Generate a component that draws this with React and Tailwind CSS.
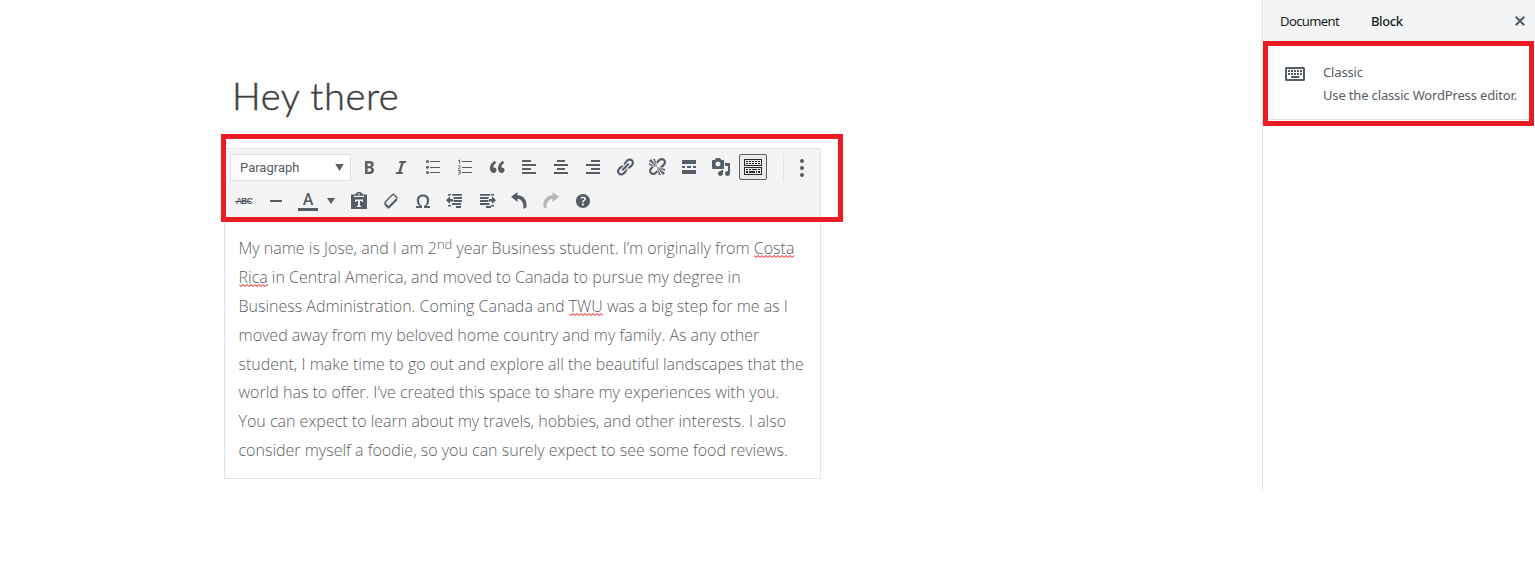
import React from "react";

function Icon({ d, children, className = "text-[#555d66]" }) {
  return (
    <svg viewBox="0 0 20 20" className={`h-5 w-5 shrink-0 ${className}`} fill="currentColor">
      {d ? <path d={d} /> : children}
    </svg>
  );
}

function Tool({ children, className = "w-8 justify-center" }) {
  return <div className={`flex h-[34px] shrink-0 items-center ${className}`}>{children}</div>;
}

const P = {
  bold: "M6 4v13h4.54c1.37 0 2.46-.33 3.26-1 .8-.66 1.2-1.58 1.2-2.77 0-.84-.17-1.51-.51-2.01s-.9-.85-1.67-1.03v-.09c.57-.1 1.02-.4 1.36-.9s.51-1.13.51-1.91c0-1.14-.39-1.98-1.17-2.5C12.75 4.26 11.5 4 9.78 4H6zm2.57 5.15V6.26h1.36c.73 0 1.27.11 1.61.32.34.22.51.58.51 1.07 0 .54-.16.92-.47 1.15s-.82.35-1.51.35h-1.5zm0 2.19h1.6c1.44 0 2.16.53 2.16 1.61 0 .6-.17 1.05-.51 1.34s-.86.43-1.57.43H8.57v-3.38z",
  italic: "M14.78 6h-2.13l-2.8 9h2.12l-.62 2H4.6l.62-2h2.14l2.8-9H8.03l.62-2h6.75z",
  quote: "M9.49 13.22c0-.74-.2-1.38-.61-1.9-.62-.78-1.83-.88-2.53-.72-.29-1.65 1.11-3.75 2.92-4.65L7.88 4c-2.73 1.3-5.42 4.28-4.96 8.05C3.21 14.43 4.59 16 6.54 16c.85 0 1.56-.25 2.12-.75s.83-1.18.83-2.03zm8.05 0c0-.74-.2-1.38-.61-1.9-.63-.78-1.83-.88-2.53-.72-.29-1.65 1.11-3.75 2.92-4.65L15.93 4c-2.73 1.3-5.41 4.28-4.95 8.05.29 2.38 1.66 3.95 3.61 3.95.85 0 1.56-.25 2.12-.75s.83-1.18.83-2.03z",
  link: "M17.74 2.76c1.68 1.69 1.68 4.41 0 6.1l-1.53 1.52c-1.12 1.12-2.7 1.47-4.14 1.09l2.62-2.61.76-.77.76-.76c.84-.84.84-2.2 0-3.04-.84-.85-2.2-.85-3.04 0l-.77.76-3.38 3.38c-.37-1.44-.02-3.02 1.1-4.14l1.52-1.53c1.69-1.68 4.42-1.68 6.1 0zM8.59 13.43l5.34-5.34c.42-.42.42-1.1 0-1.52-.44-.43-1.13-.39-1.53 0l-5.33 5.34c-.42.42-.42 1.1 0 1.52.44.43 1.13.39 1.52 0zm-.76 2.29l4.14-4.15c.38 1.44.03 3.02-1.09 4.14l-1.52 1.53c-1.69 1.68-4.41 1.68-6.1 0-1.68-1.68-1.68-4.42 0-6.1l1.53-1.52c1.12-1.12 2.7-1.47 4.14-1.1l-4.14 4.15c-.85.84-.85 2.2 0 3.05.84.84 2.2.84 3.04 0z",
  unlink: "M17.74 2.26c1.68 1.69 1.68 4.41 0 6.1l-1.53 1.52c-.32.33-.69.58-1.08.77L13 10l1.69-1.64.76-.77.76-.76c.84-.84.84-2.2 0-3.04-.84-.85-2.2-.85-3.04 0l-.77.76-.76.76L10 7l-.65-2.14c.19-.38.44-.75.77-1.07l1.52-1.53c1.69-1.68 4.42-1.68 6.1 0zM2 4l8 6-6-8zm4-2l4 8-2-8H6zM2 6l8 4-8-2V6zm7.36 7.69L10 13l.74 2.35-1.38 1.39c-1.69 1.68-4.41 1.68-6.1 0-1.68-1.68-1.68-4.42 0-6.1l1.39-1.38L7 10l-.69.64-1.52 1.53c-.85.84-.85 2.2 0 3.04.84.85 2.2.85 3.04 0zM18 16l-8-6 6 8zm-4 2l-4-8 2 8h2zm4-4l-8-4 8 2v2z",
  media: "M13 11V4c0-.55-.45-1-1-1h-1.67L9 1H5L3.67 3H2c-.55 0-1 .45-1 1v7c0 .55.45 1 1 1h10c.55 0 1-.45 1-1zM7 4.5c1.38 0 2.5 1.12 2.5 2.5S8.38 9.5 7 9.5 4.5 8.38 4.5 7 5.62 4.5 7 4.5zM14 6h5v10.5c0 1.38-1.12 2.5-2.5 2.5S14 17.88 14 16.5s1.12-2.5 2.5-2.5c.17 0 .34.02.5.05V9h-3V6zm-4 8.05V13h2v3.5c0 1.38-1.12 2.5-2.5 2.5S7 17.88 7 16.5 8.12 14 9.5 14c.17 0 .34.02.5.05z",
  help: "M17 10c0-3.87-3.14-7-7-7-3.87 0-7 3.13-7 7s3.13 7 7 7c3.86 0 7-3.13 7-7zm-6.3 1.48H9.14v-.43c0-.38.08-.7.24-.98s.46-.57.88-.89c.41-.29.68-.53.81-.71.14-.18.2-.39.2-.62 0-.25-.09-.44-.28-.58-.19-.13-.45-.19-.79-.19-.58 0-1.25.19-2 .57l-.64-1.28c.87-.49 1.8-.74 2.77-.74.81 0 1.45.2 1.92.58.48.39.71.91.71 1.55 0 .43-.09.8-.29 1.11-.19.32-.57.67-1.11 1.06-.38.28-.61.49-.71.63-.1.15-.15.34-.15.57v.35zm-1.47 2.74c-.18-.17-.27-.42-.27-.73 0-.33.08-.58.26-.75s.43-.25.77-.25c.32 0 .57.09.75.26s.27.42.27.74c0 .3-.09.55-.27.72-.18.18-.43.27-.75.27-.33 0-.58-.09-.76-.26z",
  close: "M14.95 6.46L11.41 10l3.54 3.54-1.41 1.41L10 11.42l-3.53 3.53-1.42-1.42L8.58 10 5.05 6.47l1.42-1.42L10 8.58l3.54-3.53z",
  omega: "M10 5.4c1.27 0 2.24.36 2.91 1.08.66.71 1 1.76 1 3.13 0 1.28-.23 2.37-.69 3.27-.47.89-1.27 1.52-2.22 2.12v2h6v-2h-3.69c.92-.64 1.62-1.34 2.12-2.34.49-1.01.74-2.13.74-3.35 0-1.78-.55-3.19-1.65-4.22S11.92 3.54 10 3.54s-3.43.53-4.52 1.57c-1.1 1.04-1.65 2.44-1.65 4.2 0 1.21.24 2.31.73 3.33.48 1.01 1.19 1.71 2.1 2.36H3v2h6v-2c-.98-.64-1.8-1.28-2.24-2.17-.45-.89-.67-1.96-.67-3.22 0-1.37.33-2.41 1-3.13C7.75 5.76 8.72 5.4 10 5.4z",
  alignLeft: "M3 3h9v2H3zM3 7h14v2H3zM3 11h9v2H3zM3 15h14v2H3z",
  alignCenter: "M6 3h8v2H6zM3 7h14v2H3zM6 11h8v2H6zM3 15h14v2H3z",
  alignRight: "M8 3h9v2H8zM3 7h14v2H3zM8 11h9v2H8zM3 15h14v2H3z",
  more: "M3 3h14v4H3zM3 9h3v2H3zM8 9h4v2H8zM14 9h3v2h-3zM3 13h14v4H3z",
  outdent: "M7 3h10v1.8H7zM8.500 6h8.500v2H8.500zM8.500 9h8.500v2H8.500zM7 12h9v2H7zM11 15h5v2h-5zM3 3h3v1.500H3zM3 14h3v1.500H3zM1 9.200L5 5.300v2.700h3v2.400H5v2.700z",
  indent: "M3 3h10v1.800H3zM3 6h8.500v2H3zM3 9h8.500v2H3zM3 12h9.500v2H3zM9 15h5v2H9zM14 3h3v1.500h-3zM14 14h3v1.500h-3zM19 9.200l-4-3.900v2.700h-3v2.400h3v2.700z",
  undo: "M8.5 1v3.3c6 0 10.2 5.300 8.800 12.200l-3 1.300c.8-5.600-1.500-9.600-5.800-10.100V11L2 5.800z",
  redo: "M11.500 1v3.300c-6 0-10.200 5.300-8.800 12.200l3 1.300c-.8-5.600 1.500-9.600 5.800-10.100V11L18 5.800z",
};

function Eraser() {
  return (
    <Icon>
      <path
        d="M11.4 3.7Q12.200 3 13 3.700L15.500 6.200Q16.200 7 15.500 7.900L8.300 15.200Q7.500 15.900 6.700 15.200L4.300 12.800Q3.500 12 4.300 11.100Z"
        fill="none"
        stroke="currentColor"
        strokeWidth="1.4"
      />
      <path d="M3.500 12l4 4 8.500-8.700v2.200L8.700 17q-1.200 1-2.400 0l-2.200-2.300q-.6-.6-.6-2.700z" />
    </Icon>
  );
}

function Misspelled({ children }) {
  return (
    <span className="relative">
      {children}
      <svg className="absolute left-0 top-[18px] h-1 w-full" fill="none" stroke="#f00000" strokeWidth="1">
        <path d="M0 .5l2 2 2-2 2 2 2-2 2 2 2-2 2 2 2-2 2 2 2-2 2 2 2-2 2 2 2-2 2 2 2-2 2 2 2-2 2 2 2-2 2 2 2-2" />
      </svg>
    </span>
  );
}

function Toolbar() {
  return (
    <div className="h-[71px] border-b border-[#e2e4e7] bg-[#f4f4f4] pl-[5px] pt-[1px]">
      <div className="flex h-[34px] items-center">
        <div className="mr-[3px] flex h-[27px] w-[121px] shrink-0 items-center justify-between border border-[#dddfe2] bg-white pl-[9px] pr-1.5 pt-px font-[Roboto,sans-serif] text-[13px] text-[#555d66]">
          Paragraph
          <svg width="9" height="7" viewBox="0 0 9 7" fill="#555d66"><path d="M.3 0h8.400L4.500 7z" /></svg>
        </div>
        <Tool className="w-[31px] justify-center pr-px"><Icon d={P.bold} /></Tool>
        <Tool><Icon d={P.italic} /></Tool>
        <Tool>
          <Icon>
            <path d="M7 4h10v1H7zM7 10h10v1H7zM7 15h10v1H7z" />
            <circle cx="4.500" cy="4.500" r="1.500" /><circle cx="4.500" cy="10.300" r="1.500" /><circle cx="4.500" cy="15.500" r="1.500" />
          </Icon>
        </Tool>
        <Tool>
          <Icon>
            <path d="M7 4h10v1H7zM7 10h10v1H7zM7 15h10v1H7z" />
            <path d="M3.200 3.800l1.300-.9v3.600M3.200 8.800h1.900v1.400l-1.700 1.700h2M3 13.500h2.200v3.500H3M3.500 15.200h1.500" fill="none" stroke="currentColor" strokeWidth=".9" />
          </Icon>
        </Tool>
        <Tool><Icon d={P.quote} /></Tool>
        <Tool><Icon d={P.alignLeft} /></Tool>
        <Tool><Icon d={P.alignCenter} /></Tool>
        <Tool><Icon d={P.alignRight} /></Tool>
        <Tool><Icon d={P.link} /></Tool>
        <Tool><Icon d={P.unlink} /></Tool>
        <Tool><Icon d={P.more} /></Tool>
        <Tool><Icon d={P.media} /></Tool>
        <Tool>
          <div className="flex h-[26px] w-7 items-center justify-center rounded-xs border border-[#555d66] bg-[#ebebeb]">
            <Icon className="text-[#23282d]">
              <path fillRule="evenodd" d="M1 2h18v7H1zM2 3v5h16V3zM1 10h18v8H1zM2 11v6h16v-6z" />
              <path d="M3 4h2v1H3zM6 4h2v1H6zM9 4h2v1H9zM12 4h2v1h-2zM15 4h2v1h-2zM3 6h2v1H3zM6 6h2v1H6zM9 6h2v1H9zM12 6h2v1h-2zM15 6h2v1h-2zM3 12h2v1H3zM6 12h2v1H6zM9 12h5v1H9zM15 12h2v1h-2zM3 14h2v2H3zM6 14h6v2H6zM13 14h1v2h-1zM15 14h2v2h-2z" />
            </Icon>
          </div>
        </Tool>
        <div className="ml-3.5 h-7 w-px bg-[#e2e4e7]" />
        <Tool className="w-9 justify-center">
          <Icon><circle cx="10" cy="4" r="2" /><circle cx="10" cy="11" r="2" /><circle cx="10" cy="18" r="2" /></Icon>
        </Tool>
      </div>
      <div className="flex h-[34px] items-center">
        <Tool className="w-[30px] pl-[6px]">
          <span className="relative font-['Liberation_Sans',sans-serif] text-[8.5px] font-bold leading-none tracking-[-0.8px] text-[#555d66] after:absolute after:-left-px after:top-1 after:h-px after:w-4 after:bg-[#555d66]">ABC</span>
        </Tool>
        <Tool><Icon d="M4 9h12v2H4z" /></Tool>
        <Tool>
          <div className="flex h-5 w-5 flex-col items-center justify-between font-[Roboto,sans-serif] text-base font-medium leading-[17px] text-[#555d66]">
            A<span className="h-[3px] w-5 bg-[#555d66]" />
          </div>
        </Tool>
        <Tool className="w-4 pl-[3px]">
          <svg width="8" height="6" viewBox="0 0 8 6" fill="#555d66"><path d="M0 0h8L4 6z" /></svg>
        </Tool>
        <Tool className="w-[37px] justify-center">
          <Icon>
            <path fillRule="evenodd" d="M6 3.500q.3-1 1.500-1.500L8.500 1h3l1 1q1.200.5 1.500 1.500h4V18H2V3.500zM9 2.500v1h2v-1zM5 4.800v1.200h10V4.800zM6 8.500v2.500h1.200V9.900h1.900v4.900H8V16h4v-1.200h-1.100V9.900h1.900V11H14V8.500z" />
          </Icon>
        </Tool>
        <Tool className="w-[27px] justify-center"><Eraser /></Tool>
        <Tool className="w-[37px] justify-center"><Icon d={P.omega} /></Tool>
        <Tool className="w-[27px] justify-center"><Icon d={P.outdent} /></Tool>
        <Tool className="w-[37px] justify-center"><Icon d={P.indent} /></Tool>
        <Tool className="w-[27px] justify-center"><Icon d={P.undo} /></Tool>
        <Tool className="w-[37px] justify-center"><Icon d={P.redo} className="text-[#b5b8bc]" /></Tool>
        <Tool className="w-[27px] justify-center"><Icon d={P.help} /></Tool>
      </div>
    </div>
  );
}

export default function App() {
  return (
    <div className="relative flex h-[583px] w-[1535px] overflow-hidden bg-white">
      <main className="w-[1262px] pl-56 pt-[70px]">
        <h1 className="h-[78px] pl-2 font-[Lato,sans-serif] text-[38px] font-light leading-[50px] tracking-[0.6px] text-[#404040] [-webkit-text-stroke:0.5px_#404040]">Hey there</h1>
        <div className="h-[331px] w-[597px] border border-[#e2e4e7]">
          <Toolbar />
          <p className="whitespace-nowrap pl-[13.5px] pt-[14.4px] font-['Open_Sans',sans-serif] text-base font-light leading-[28.800px] text-[#5c5f62]">
            My name is Jose, and I am 2<sup className="top-[-5px] text-[13px]">nd</sup> year Business student. I’m originally from <Misspelled>Costa</Misspelled><br />
            <Misspelled>Rica</Misspelled> in Central America, and moved to Canada to pursue my degree in<br />
            Business Administration. Coming Canada and <Misspelled>TWU</Misspelled> was a big step for me as I<br />
            moved away from my beloved home country and my family. As any other<br />
            student, I make time to go out and explore all the beautiful landscapes that the<br />
            world has to offer. I’ve created this space to share my experiences with you.<br />
            You can expect to learn about my travels, hobbies, and other interests. I also<br />
            consider myself a foodie, so you can surely expect to see some food reviews.
          </p>
        </div>
      </main>
      <aside className="h-[490px] w-[273px] border-l border-[#e2e4e7] font-['Noto_Sans',sans-serif] text-[13px]">
        <header className="flex h-[41px] items-center bg-[#f3f4f5] pl-[17px] pr-[5px] text-[#191e23]">
          <span className="w-[91px] pt-0.5 tracking-[-0.6px]">Document</span>
          <span className="pt-0.5 font-medium tracking-[-0.4px]">Block</span>
          <Icon d={P.close} className="ml-auto text-[#555d66]" />
        </header>
        <section className="flex h-[79px] border-b border-[#e2e4e7] pl-[22px] pt-5 text-[#555d66]">
          <svg viewBox="0 0 20 14" className="mr-[18px] mt-[6px] h-3.5 w-5" fill="currentColor">
            <path fillRule="evenodd" d="M1.500 0h17Q20 0 20 1.500v11q0 1.500-1.500 1.500h-17Q0 14 0 12.500v-11Q0 0 1.500 0zM2 2v10h16V2z" />
            <path d="M3 3h2v2H3zM6 3h2v2H6zM9 3h2v2H9zM12 3h2v2h-2zM15 3h2v2h-2zM3 6h2v2H3zM6 6h2v2H6zM9 6h2v2H9zM12 6h2v2h-2zM15 6h2v2h-2zM6 9h8v2H6z" />
          </svg>
          <div className="whitespace-nowrap leading-[23px] tracking-[-0.16px]">
            <div>Classic</div>
            <div>Use the classic WordPress editor.</div>
          </div>
        </section>
      </aside>
      <div className="absolute left-[221px] top-[134px] h-[88px] w-[622px] border-[5px] border-[#ed1c24]" />
      <div className="absolute left-[1263px] top-[41px] h-[85px] w-[271px] border-[5px] border-[#ed1c24]" />
    </div>
  );
}
